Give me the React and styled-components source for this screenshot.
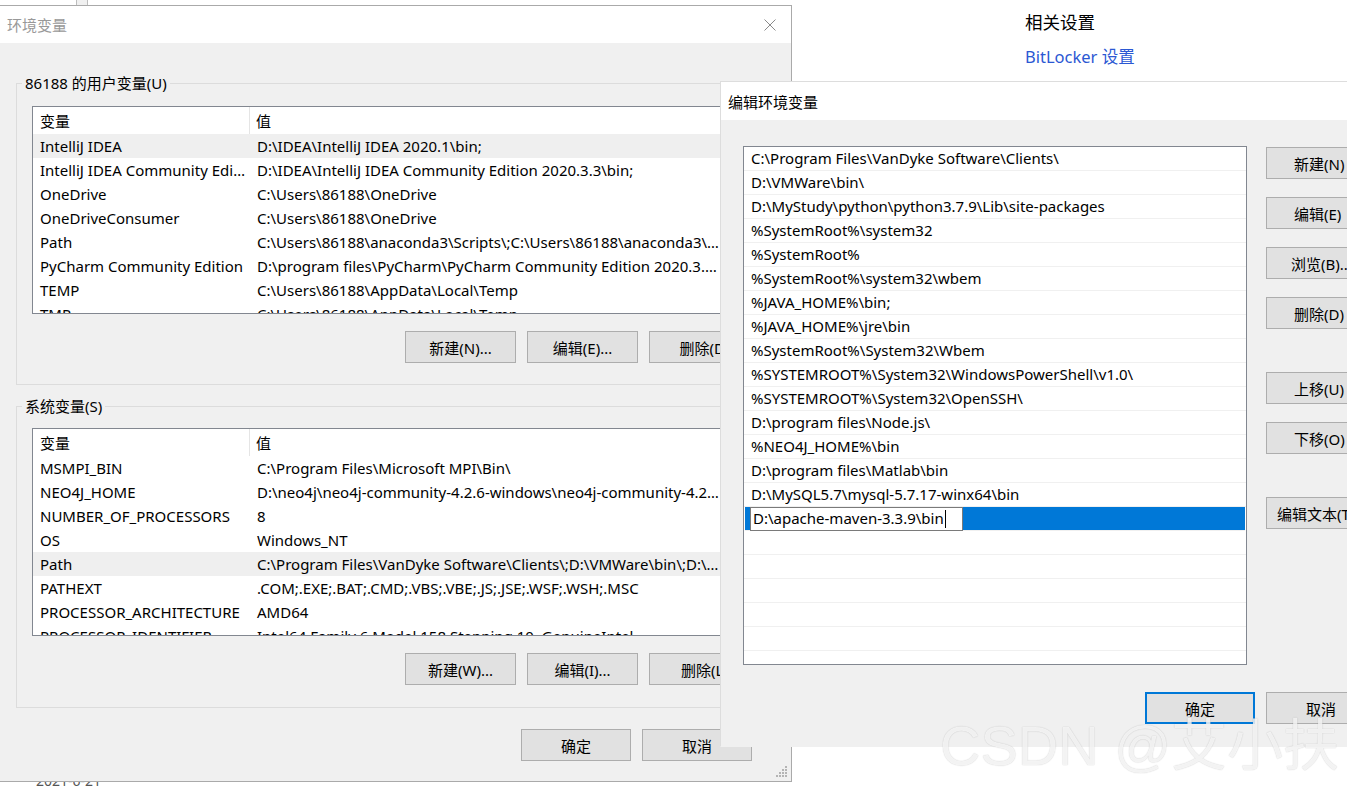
import React from 'react';
import styled, { createGlobalStyle } from 'styled-components';

const GlobalStyle = createGlobalStyle`
  html, body {
    margin: 0;
    padding: 0;
    background: #fff;
  }
  body {
    font-family: "Noto Sans", "Noto Sans CJK SC", sans-serif;
    font-size: 15px;
    color: #000;
  }
  * {
    box-sizing: border-box;
  }
`;

const Desktop = styled.div`
  position: relative;
  width: 1347px;
  height: 787px;
  overflow: hidden;
  background: #fff;
`;

/* page behind the dialogs */
const SettingsAside = styled.aside`
  position: absolute;
  left: 1025px;
  top: 10px;
  display: flex;
  flex-direction: column;
  gap: 11px;
`;

const AsideTitle = styled.div`
  font-family: "Noto Sans CJK SC", sans-serif;
  font-size: 17.5px;
  line-height: 24px;
`;

const AsideLink = styled.a`
  font-family: "Noto Sans", "Noto Sans CJK SC", sans-serif;
  font-size: 16.5px;
  line-height: 24px;
  color: #2b58d3;
  text-decoration: none;
`;

const PageDate = styled.div`
  position: absolute;
  left: 36px;
  top: 771px;
  font-size: 14px;
  color: #555;
`;

const ScrollStub = styled.div`
  position: absolute;
  left: 76px;
  top: -6px;
  width: 12px;
  height: 12px;
  border: 1px solid #bdbdbd;
  background: #f0f0f0;
`;

/* windows */
const Window = styled.section`
  position: absolute;
  left: ${({ $left }) => $left}px;
  top: ${({ $top }) => $top}px;
  width: ${({ $w }) => $w}px;
  height: ${({ $h }) => $h}px;
  background: #f0f0f0;
  border: 1px solid ${({ $active }) => ($active ? '#dddddd' : '#aaaaaa')};
  border-bottom-color: ${({ $active }) => ($active ? 'transparent' : '#aaaaaa')};
  display: flex;
  flex-direction: column;
  overflow: hidden;
  z-index: ${({ $z }) => $z};
`;

const TitleBar = styled.header`
  height: ${({ $h }) => $h}px;
  flex: none;
  background: #fff;
  display: flex;
  align-items: center;
  justify-content: space-between;
  padding-left: 7px;
`;

const Title = styled.span`
  font-family: "Noto Sans CJK SC", sans-serif;
  font-size: 15px;
  color: ${({ $active }) => ($active ? '#000' : '#999')};
`;

const CloseBtn = styled.div`
  width: 42px;
  height: 100%;
  display: flex;
  align-items: center;
  justify-content: center;
`;

const Body = styled.div`
  flex: 1;
  position: relative;
  display: flex;
  flex-direction: column;
  padding: ${({ $pad }) => $pad};
`;

const GroupBox = styled.fieldset`
  margin: 0;
  margin-top: ${({ $mt }) => $mt || 0}px;
  padding: ${({ $pt }) => $pt}px 17px 0 15px;
  width: 762px;
  height: 311px;
  border: 1px solid #dcdcdc;
  display: flex;
  flex-direction: column;
`;

const GroupLabel = styled.legend`
  margin-left: -10px;
  padding: 0 3px;
  font-size: 15px;
  line-height: 18px;
`;

const ListView = styled.div`
  height: 208px;
  flex: none;
  background: #fff;
  border: 1px solid #828790;
  overflow: hidden;
`;

const Cols = styled.div`
  display: grid;
  grid-template-columns: 217px 472px 1fr;
  height: ${({ $h }) => $h}px;
  align-items: center;
  background: ${({ $sel }) => ($sel ? '#efefef' : 'transparent')};
`;

const HeadCell = styled.div`
  height: 100%;
  display: flex;
  align-items: center;
  padding-left: ${({ $first }) => ($first ? 7 : 6)}px;
  border-right: ${({ $first }) => ($first ? '1px solid #e5e5e5' : 'none')};
  font-family: "Noto Sans CJK SC", sans-serif;
  font-size: 15px;
`;

const Cell = styled.div`
  padding-left: 7px;
  padding-right: 3px;
  white-space: nowrap;
  overflow: hidden;
  text-overflow: ellipsis;
  line-height: 24px;
`;

const ButtonRow = styled.div`
  display: flex;
  justify-content: flex-end;
  gap: 11px;
  margin-top: ${({ $mt }) => $mt}px;
  padding-right: ${({ $pr }) => $pr || 0}px;
`;

const Button = styled.button`
  width: ${({ $w }) => $w || 111}px;
  height: 32px;
  flex: none;
  background: #e1e1e1;
  border: ${({ $default }) => ($default ? '2px solid #0078d7' : '1px solid #adadad')};
  font-family: "Noto Sans", "Noto Sans CJK SC", sans-serif;
  font-size: 15px;
  color: #000;
  padding: 0;
  white-space: nowrap;
`;

const Grip = styled.svg`
  position: absolute;
  right: 3px;
  bottom: 3px;
`;

/* edit dialog */
const EditLayout = styled.div`
  display: grid;
  grid-template-columns: 504px 110px;
  column-gap: 19px;
`;

const PathList = styled.div`
  height: 519px;
  background: #fff;
  border: 1px solid #828790;
  overflow: hidden;
`;

const PathRow = styled.div`
  height: 24px;
  border-bottom: 1px solid #f0f0f0;
  display: flex;
  align-items: center;
  padding-left: ${({ $editing }) => ($editing ? 5 : 7)}px;
  margin: 0 ${({ $editing }) => ($editing ? 1 : 0)}px;
  background: ${({ $editing }) => ($editing ? '#0078d7' : '#fff')};
  white-space: nowrap;
  line-height: 23px;
`;

const EditBox = styled.div`
  width: 213px;
  height: 24px;
  background: #fff;
  border: 1px solid #7a7a7a;
  padding-left: 2px;
  display: flex;
  align-items: center;
`;

const Caret = styled.span`
  display: inline-block;
  width: 1px;
  height: 18px;
  background: #000;
  margin-left: 1px;
`;

const SideButtons = styled.div`
  display: flex;
  flex-direction: column;
  padding-top: 1px;
`;

const SideButton = styled(Button)`
  width: 110px;
  margin-top: ${({ $gap }) => $gap}px;
  text-align: left;
  padding-left: ${({ $pl }) => $pl}px;
`;

const DialogFooter = styled.div`
  display: flex;
  gap: 11px;
  justify-content: flex-end;
  margin-top: 27px;
  padding-right: 23px;
`;

const Watermark = styled.div`
  position: absolute;
  left: 940px;
  top: 713px;
  z-index: 10;
  font-family: "Liberation Sans", "Noto Sans CJK SC", sans-serif;
  font-size: 56px;
  line-height: 66px;
  color: rgba(255, 255, 255, 0.8);
  text-shadow: 0 0 1px rgba(0, 0, 0, 0.2), 0 0 2px rgba(0, 0, 0, 0.06);
  white-space: nowrap;
  pointer-events: none;
`;

const userVars = [
  ['IntelliJ IDEA', 'D:\\IDEA\\IntelliJ IDEA 2020.1\\bin;'],
  ['IntelliJ IDEA Community Edition', 'D:\\IDEA\\IntelliJ IDEA Community Edition 2020.3.3\\bin;'],
  ['OneDrive', 'C:\\Users\\86188\\OneDrive'],
  ['OneDriveConsumer', 'C:\\Users\\86188\\OneDrive'],
  ['Path', 'C:\\Users\\86188\\anaconda3\\Scripts\\;C:\\Users\\86188\\anaconda3\\Library\\bin;'],
  ['PyCharm Community Edition', 'D:\\program files\\PyCharm\\PyCharm Community Edition 2020.3.3\\bin;'],
  ['TEMP', 'C:\\Users\\86188\\AppData\\Local\\Temp'],
  ['TMP', 'C:\\Users\\86188\\AppData\\Local\\Temp'],
];

const systemVars = [
  ['MSMPI_BIN', 'C:\\Program Files\\Microsoft MPI\\Bin\\'],
  ['NEO4J_HOME', 'D:\\neo4j\\neo4j-community-4.2.6-windows\\neo4j-community-4.2.6'],
  ['NUMBER_OF_PROCESSORS', '8'],
  ['OS', 'Windows_NT'],
  ['Path', 'C:\\Program Files\\VanDyke Software\\Clients\\;D:\\VMWare\\bin\\;D:\\MyStudy\\python'],
  ['PATHEXT', '.COM;.EXE;.BAT;.CMD;.VBS;.VBE;.JS;.JSE;.WSF;.WSH;.MSC'],
  ['PROCESSOR_ARCHITECTURE', 'AMD64'],
  ['PROCESSOR_IDENTIFIER', 'Intel64 Family 6 Model 158 Stepping 10, GenuineIntel'],
];

const pathEntries = [
  'C:\\Program Files\\VanDyke Software\\Clients\\',
  'D:\\VMWare\\bin\\',
  'D:\\MyStudy\\python\\python3.7.9\\Lib\\site-packages',
  '%SystemRoot%\\system32',
  '%SystemRoot%',
  '%SystemRoot%\\system32\\wbem',
  '%JAVA_HOME%\\bin;',
  '%JAVA_HOME%\\jre\\bin',
  '%SystemRoot%\\System32\\Wbem',
  '%SYSTEMROOT%\\System32\\WindowsPowerShell\\v1.0\\',
  '%SYSTEMROOT%\\System32\\OpenSSH\\',
  'D:\\program files\\Node.js\\',
  '%NEO4J_HOME%\\bin',
  'D:\\program files\\Matlab\\bin',
  'D:\\MySQL5.7\\mysql-5.7.17-winx64\\bin',
];

const sideButtons = [
  ['新建(N)', 0, 27],
  ['编辑(E)', 18, 27],
  ['浏览(B)...', 18, 24],
  ['删除(D)', 18, 27],
  ['上移(U)', 43, 27],
  ['下移(O)', 18, 27],
  ['编辑文本(T)', 43, 10],
];

function VarList({ rows, selected }) {
  return (
    <ListView>
      <Cols $h={27}>
        <HeadCell $first>变量</HeadCell>
        <HeadCell>值</HeadCell>
      </Cols>
      {rows.map(([name, value], i) => (
        <Cols key={name} $h={24} $sel={i === selected}>
          <Cell>{name}</Cell>
          <Cell>{value}</Cell>
        </Cols>
      ))}
    </ListView>
  );
}

function CloseIcon({ color }) {
  return (
    <svg width="12" height="12" viewBox="0 0 12 12">
      <path d="M0.5 0.5 L11.5 11.5 M11.5 0.5 L0.5 11.5" stroke={color} strokeWidth="1" fill="none" />
    </svg>
  );
}

function EnvWindow() {
  return (
    <Window $left={-1} $top={5} $w={793} $h={777} $z={2}>
      <TitleBar $h={37}>
        <Title>环境变量</Title>
        <CloseBtn>
          <CloseIcon color="#8a8a8a" />
        </CloseBtn>
      </TitleBar>
      <Body $pad="31px 0 0 16px">
        <GroupBox $pt={14}>
          <GroupLabel>86188 的用户变量(U)</GroupLabel>
          <VarList rows={userVars} selected={0} />
          <ButtonRow $mt={17}>
            <Button>新建(N)...</Button>
            <Button>编辑(E)...</Button>
            <Button>删除(D)</Button>
          </ButtonRow>
        </GroupBox>
        <GroupBox $pt={13} $mt={12}>
          <GroupLabel>系统变量(S)</GroupLabel>
          <VarList rows={systemVars} selected={4} />
          <ButtonRow $mt={17}>
            <Button>新建(W)...</Button>
            <Button>编辑(I)...</Button>
            <Button>删除(L)</Button>
          </ButtonRow>
        </GroupBox>
        <ButtonRow $mt={21} $pr={39}>
          <Button $w={110}>确定</Button>
          <Button $w={110}>取消</Button>
        </ButtonRow>
        <Grip width="12" height="12" viewBox="0 0 12 12">
          {[[9, 0], [6, 3], [9, 3], [3, 6], [6, 6], [9, 6], [0, 9], [3, 9], [6, 9], [9, 9]].map(([x, y]) => (
            <rect key={`${x}-${y}`} x={x} y={y} width="2" height="2" fill="#b4b4b4" />
          ))}
        </Grip>
      </Body>
    </Window>
  );
}

function EditWindow() {
  return (
    <Window $left={720} $top={81} $w={680} $h={666} $z={3} $active>
      <TitleBar $h={38}>
        <Title $active>编辑环境变量</Title>
      </TitleBar>
      <Body $pad="26px 0 0 22px">
        <EditLayout>
          <PathList>
            {pathEntries.map((p) => (
              <PathRow key={p}>{p}</PathRow>
            ))}
            <PathRow $editing>
              <EditBox>
                D:\apache-maven-3.3.9\bin
                <Caret />
              </EditBox>
            </PathRow>
            {Array.from({ length: 6 }, (_, i) => (
              <PathRow key={`empty-${i}`} />
            ))}
          </PathList>
          <SideButtons>
            {sideButtons.map(([label, gap, pl]) => (
              <SideButton key={label} $gap={gap} $pl={pl}>
                {label}
              </SideButton>
            ))}
          </SideButtons>
        </EditLayout>
        <DialogFooter>
          <Button $w={110} $default>确定</Button>
          <Button $w={110}>取消</Button>
        </DialogFooter>
      </Body>
    </Window>
  );
}

export default function App() {
  return (
    <Desktop>
      <GlobalStyle />
      <ScrollStub />
      <SettingsAside>
        <AsideTitle>相关设置</AsideTitle>
        <AsideLink>BitLocker 设置</AsideLink>
      </SettingsAside>
      <PageDate>2021-6-21</PageDate>
      <EnvWindow />
      <EditWindow />
      <Watermark>CSDN @艾小扶</Watermark>
    </Desktop>
  );
}
